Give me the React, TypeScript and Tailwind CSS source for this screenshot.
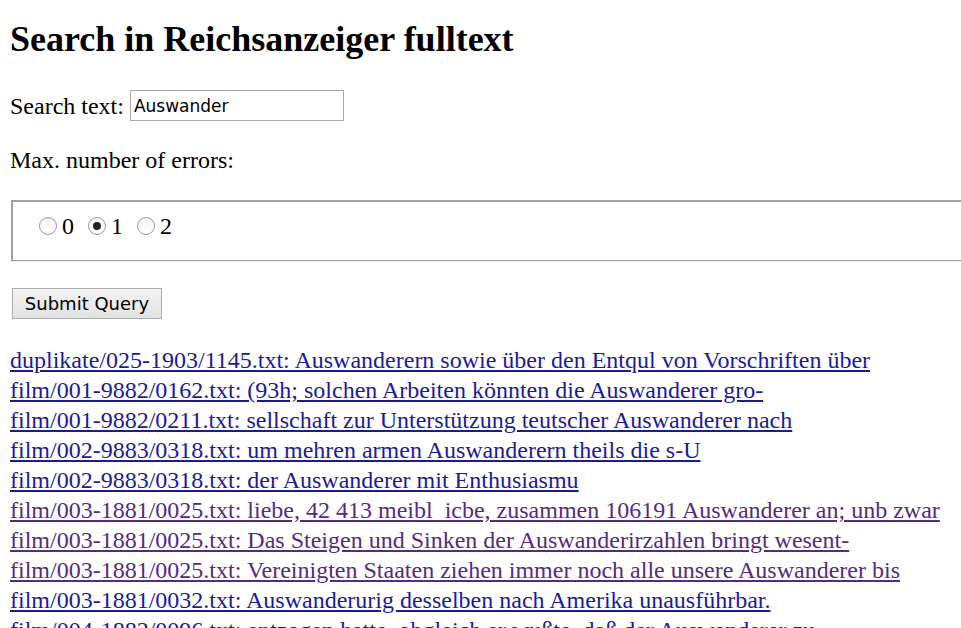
import { useState } from "react";

const RESULTS: { text: string; visited?: boolean }[] = [
  { text: "duplikate/025-1903/1145.txt: Auswanderern sowie über den Entqul von Vorschriften über" },
  { text: "film/001-9882/0162.txt: (93h; solchen Arbeiten könnten die Auswanderer gro-" },
  { text: "film/001-9882/0211.txt: sellschaft zur Unterstützung teutscher Auswanderer nach" },
  { text: "film/002-9883/0318.txt: um mehren armen Auswanderern theils die s-U" },
  { text: "film/002-9883/0318.txt: der Auswanderer mit Enthusiasmu" },
  { text: "film/003-1881/0025.txt: liebe, 42 413 meibl_icbe, zusammen 106191 Auswanderer an; unb zwar", visited: true },
  { text: "film/003-1881/0025.txt: Das Steigen und Sinken der Auswanderirzahlen bringt wesent-", visited: true },
  { text: "film/003-1881/0025.txt: Vereinigten Staaten ziehen immer noch alle unsere Auswanderer bis", visited: true },
  { text: "film/003-1881/0032.txt: Auswanderurig desselben nach Amerika unausführbar." },
  { text: "film/004-1882/0096.txt: entzogen hatte, obgleich er wußte, daß der Auswanderer zu" },
];

function Radio({ checked, onClick }: { checked: boolean; onClick: () => void }) {
  return (
    <span onClick={onClick}
      className="w-[18px] h-[18px] rounded-full border border-[#9a9a9a] bg-gradient-to-b from-[#f4f4f4] to-white flex items-center justify-center shrink-0 cursor-pointer">
      {checked && <span className="w-[8px] h-[8px] rounded-full bg-[#222]" />}
    </span>
  );
}

export default function App() {
  const [query, setQuery] = useState("Auswander");
  const [errors, setErrors] = useState(1);

  return (
    <div className="w-[961px] h-[628px] overflow-hidden bg-white text-black font-['Liberation_Serif',serif] text-[24px] leading-[28px]">
      <div className="pl-[10px]">
        <h2 className="pt-[19px] text-[36px] leading-[40px] font-bold">Search in Reichsanzeiger fulltext</h2>

        <div className="mt-[31px] flex items-center h-[31px]">
          <span>Search text:</span>
          <input value={query} onChange={(e) => setQuery(e.target.value)}
            className="ml-[6px] w-[214px] h-[31px] border border-[#a9a9a9] pl-[3px] text-[17px] font-['DejaVu_Sans',sans-serif] outline-none" />
        </div>

        <p className="mt-[25px]">Max. number of errors:</p>

        <div className="mt-[26px] ml-[1px] w-[1000px] h-[61px] border-t-2 border-l-2 border-b border-[#a0a0a0] shadow-[0_1px_0_#ececec] pt-[10px] pl-[26px]">
          <div className="flex items-center h-[28px]">
            {[0, 1, 2].map((n) => (
              <label key={n} className="flex items-center mr-[14px]">
                <Radio checked={errors === n} onClick={() => setErrors(n)} />
                <span className="ml-[5px]">{n}</span>
              </label>
            ))}
          </div>
        </div>

        <button className="mt-[27px] ml-[2px] block w-[150px] h-[31px] border border-[#adadad] bg-gradient-to-b from-[#f2f2f2] to-[#e3e3e3] text-[18px] font-['DejaVu_Sans',sans-serif] leading-none">
          Submit Query
        </button>

        <div className="mt-[26px] leading-[30px]">
          {RESULTS.map((r, i) => (
            <div key={i}>
              <a href="#" className={`underline ${r.visited ? "text-[#552a85]" : "text-[#1a1aa0]"}`}>{r.text}</a>
            </div>
          ))}
        </div>
      </div>
    </div>
  );
}
